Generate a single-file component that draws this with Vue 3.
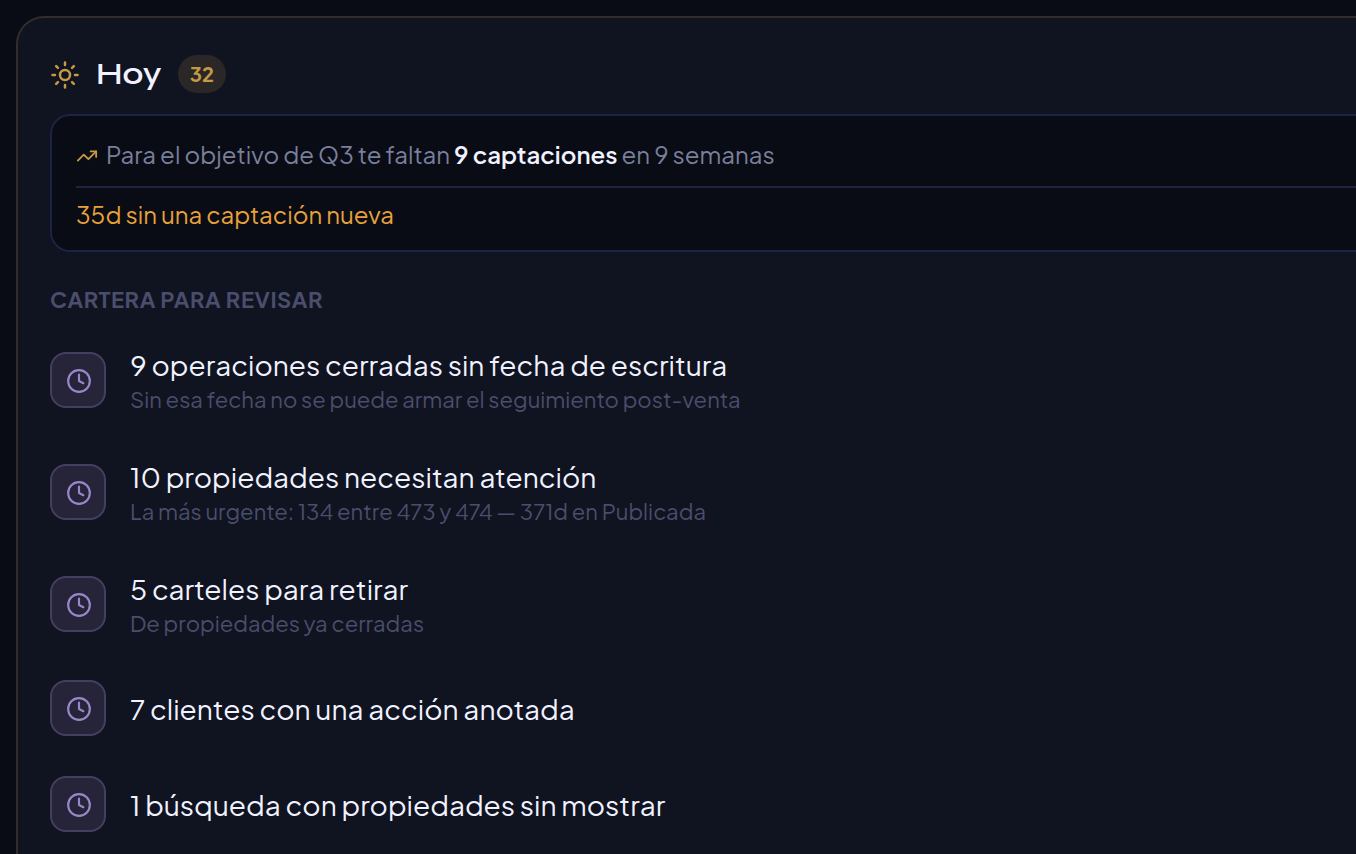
<template>
  <main class="page">
    <section class="today-card" aria-labelledby="today-title">
      <header class="today-header">
        <svg class="sun-icon" viewBox="0 0 24 24" fill="none" stroke="currentColor" stroke-width="2" stroke-linecap="round" aria-hidden="true">
          <circle cx="12" cy="12" r="4" />
          <path d="M12 2v2M12 20v2M4.93 4.93l1.41 1.41M17.66 17.66l1.41 1.41M2 12h2M20 12h2M6.34 17.66l-1.41 1.41M19.07 4.93l-1.41 1.41" />
        </svg>
        <h1 id="today-title" class="today-title">Hoy</h1>
        <span class="count-badge">{{ total }}</span>
      </header>

      <div class="goal-box">
        <p class="goal-line">
          <svg class="trend-icon" viewBox="0 0 24 24" fill="none" stroke="currentColor" stroke-width="2" stroke-linecap="round" stroke-linejoin="round" aria-hidden="true">
            <path d="M22 7l-8.5 8.5-5-5L2 17" />
            <path d="M16 7h6v6" />
          </svg>
          <span>Para el objetivo de Q3 te faltan <strong>9 captaciones</strong> en 9 semanas</span>
        </p>
        <p class="goal-warning">35d sin una captación nueva</p>
      </div>

      <h2 class="group-title">Cartera para revisar</h2>
      <ul class="task-list">
        <li v-for="task in tasks" :key="task.title" class="task">
          <span class="task-icon">
            <svg viewBox="0 0 24 24" fill="none" stroke="currentColor" stroke-width="2" stroke-linecap="round" stroke-linejoin="round" aria-hidden="true">
              <circle cx="12" cy="12" r="10" />
              <path d="M12 6v6l4 2" />
            </svg>
          </span>
          <div class="task-text">
            <p class="task-title">{{ task.title }}</p>
            <p v-if="task.detail" class="task-detail">{{ task.detail }}</p>
          </div>
        </li>
      </ul>
    </section>
  </main>
</template>

<script setup>
import { ref } from 'vue'

const tasks = ref([
  {
    title: '9 operaciones cerradas sin fecha de escritura',
    detail: 'Sin esa fecha no se puede armar el seguimiento post-venta'
  },
  {
    title: '10 propiedades necesitan atención',
    detail: 'La más urgente: 134 entre 473 y 474 — 371d en Publicada'
  },
  {
    title: '5 carteles para retirar',
    detail: 'De propiedades ya cerradas'
  },
  { title: '7 clientes con una acción anotada' },
  { title: '1 búsqueda con propiedades sin mostrar' }
])

const total = ref(32)
</script>

<style>
body {
  margin: 0;
  background-color: #090b15;
}
</style>

<style scoped>
.page {
  box-sizing: border-box;
  min-height: 100vh;
  padding: 16px 0 0 16px;
  font-family: "Plus Jakarta Sans", Inter, "Liberation Sans", sans-serif;
  color: #f0f2ff;
}

h1,
h2,
p,
ul {
  margin: 0;
  padding: 0;
}

/* The card bleeds off the right side of the page */
.today-card {
  box-sizing: border-box;
  min-height: calc(100vh - 16px);
  padding: 36px 0 32px 32px;
  background-color: #101320;
  border: 2px solid #332c2a;
  border-right: none;
  border-radius: 28px 0 0 0;
}

.today-header {
  display: flex;
  align-items: center;
  height: 40px;
  margin-bottom: 20px;
}

.sun-icon {
  width: 30px;
  height: 30px;
  margin-top: 2px;
  margin-right: 16px;
  color: #c49a45;
}

.today-title {
  margin-right: 16px;
  font-family: Syne, "Plus Jakarta Sans", Inter, sans-serif;
  font-size: 32px;
  line-height: 40px;
  font-weight: 600;
}

.count-badge {
  padding: 0 12px;
  border-radius: 20px;
  background-color: #2a2726;
  color: #c49a45;
  font-size: 20px;
  line-height: 38px;
  font-weight: 700;
}

.goal-box {
  padding: 20px 0 16px 24px;
  background-color: #090b15;
  border: 2px solid #1e2340;
  border-right: none;
  border-radius: 20px 0 0 20px;
  font-size: 24px;
  line-height: 36px;
}

.goal-line {
  display: flex;
  align-items: center;
  gap: 8px;
  padding-bottom: 14px;
  border-bottom: 2px solid #1e2340;
  color: #7a809c;
}

.goal-line strong {
  color: #f0f2ff;
  font-weight: 600;
}

.trend-icon {
  width: 22px;
  height: 22px;
  margin-top: 4px;
  color: #c49a45;
}

.goal-warning {
  padding-top: 8px;
  padding-bottom: 2px;
  color: #e8a23a;
}

.group-title {
  margin-top: 32px;
  color: #4a4d6c;
  font-size: 22px;
  line-height: 30px;
  font-weight: 700;
  letter-spacing: 0.025em;
  text-transform: uppercase;
}

.task-list {
  padding-top: 10px;
  list-style: none;
}

.task {
  display: flex;
  align-items: center;
  gap: 24px;
  padding: 20px 0;
}

.task-icon {
  display: flex;
  align-items: center;
  justify-content: center;
  box-sizing: border-box;
  width: 56px;
  height: 56px;
  padding: 2px 0 0 2px;
  background-color: #252438;
  border: 2px solid #443f5e;
  border-radius: 16px;
  color: #9a86c8;
}

.task-icon svg {
  width: 26px;
  height: 26px;
}

.task-title {
  padding-top: 2px;
  font-size: 28px;
  line-height: 38px;
}

.task-detail {
  padding-bottom: 2px;
  color: #4a4d6c;
  font-size: 22px;
  line-height: 30px;
}
</style>
